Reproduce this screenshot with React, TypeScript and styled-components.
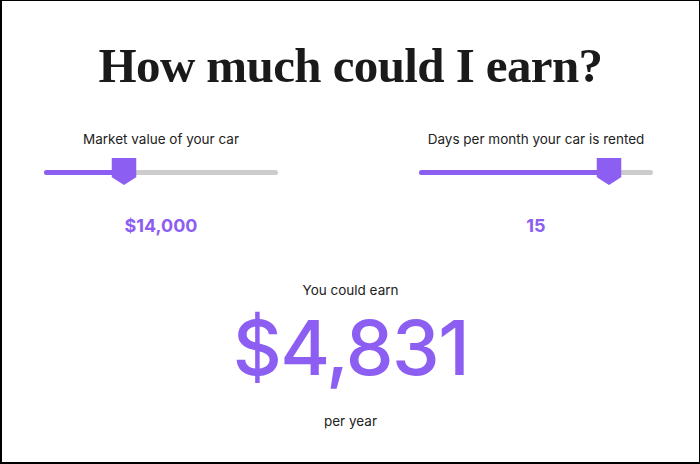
import { memo } from "react";
import styled, { createGlobalStyle } from "styled-components";

const PURPLE = "#8c5ef2";

const GlobalStyle = createGlobalStyle`
  * { box-sizing: border-box; }
  html, body { margin: 0; padding: 0; background: #fff; }
  body { font-family: Inter, "Noto Sans", sans-serif; color: #222; }
`;

type SliderProps = {
  label: string;
  value: string;
  ratio: number;
};

const Slider = memo(({ label, value, ratio }: SliderProps) => (
  <SField>
    <SLabel>{label}</SLabel>
    <STrack>
      <SFill style={{ width: `${ratio * 100}%` }} />
      <SThumb style={{ left: `${ratio * 100}%` }}>
        <svg width="25" height="27" viewBox="0 0 25 27">
          <path d="M0 0 H25 V19 L12.5 27 L0 19 Z" fill={PURPLE} />
        </svg>
      </SThumb>
    </STrack>
    <SValue>{value}</SValue>
  </SField>
));

export default function App() {
  return (
    <>
      <GlobalStyle />
      <SFrame>
        <STitle>How much could I earn?</STitle>
        <SSliders>
          <Slider label="Market value of your car" value="$14,000" ratio={0.34} />
          <Slider label="Days per month your car is rented" value="15" ratio={0.81} />
        </SSliders>
        <SResult>
          <SCaption>You could earn</SCaption>
          <SAmount>$4,831</SAmount>
          <SCaption>per year</SCaption>
        </SResult>
      </SFrame>
    </>
  );
}

const SFrame = styled.div`
  width: 700px;
  height: 464px;
  border: 1px solid #000;
  border-left-width: 2px;
  border-bottom-width: 2px;
  display: flex;
  flex-direction: column;
  align-items: center;
  padding-top: 38px;
`;

const STitle = styled.h1`
  margin: 0;
  font-family: "Liberation Serif", "DejaVu Serif", serif;
  font-weight: 700;
  font-size: 49px;
  line-height: 54px;
  letter-spacing: -0.6px;
  color: #1a1a1a;
`;

const SSliders = styled.div`
  display: flex;
  justify-content: space-between;
  width: 100%;
  padding: 0 46px 0 42px;
  margin-top: 38px;
`;

const SField = styled.div`
  width: 234px;
  display: flex;
  flex-direction: column;
  align-items: center;
`;

const SLabel = styled.div`
  font-size: 13.5px;
  line-height: 16px;
  color: #222;
`;

const STrack = styled.div`
  position: relative;
  width: 100%;
  height: 5px;
  border-radius: 3px;
  background: #cccccc;
  margin-top: 23px;
`;

const SFill = styled.div`
  height: 100%;
  border-radius: 3px;
  background: ${PURPLE};
`;

const SThumb = styled.div`
  position: absolute;
  top: -12px;
  width: 25px;
  height: 27px;
  transform: translateX(-50%);
  display: flex;
`;

const SValue = styled.div`
  margin-top: 41px;
  font-size: 18px;
  font-weight: 700;
  line-height: 20px;
  color: ${PURPLE};
`;

const SResult = styled.div`
  display: flex;
  flex-direction: column;
  align-items: center;
  margin-top: 46px;
`;

const SCaption = styled.div`
  font-size: 13.5px;
  line-height: 16px;
  color: #222;
`;

const SAmount = styled.div`
  font-family: Inter, "Noto Sans", sans-serif;
  font-size: 76px;
  line-height: 80px;
  font-weight: 500;
  color: ${PURPLE};
  margin: 9px 0 26px;
  letter-spacing: -1.5px;
`;
